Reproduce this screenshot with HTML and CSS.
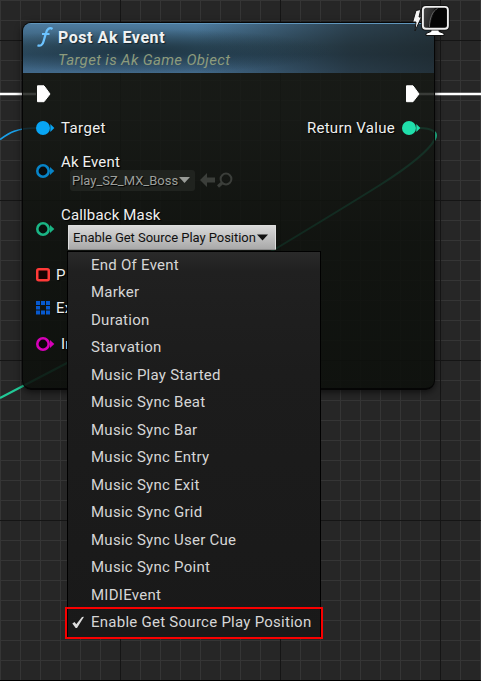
FILE: index.html
```html
<!DOCTYPE html>
<html lang="en">
<head>
<meta charset="utf-8">
<title>Blueprint graph</title>
<link rel="stylesheet" href="styles.css">
</head>
<body>
<main class="graph">
  <svg class="wires" width="481" height="681" viewBox="0 0 481 681" fill="none">
    <path d="M0 94H36M419 94H481" stroke="#fff" stroke-width="2.6"/>
    <path d="M0 139.500C9 133 17 128 36 128" stroke="#1a9fe8" stroke-width="1.700"/>
    <path d="M419 128C432 128 438.500 132 435 139C428 153 402 171 380 185C345 207 310 228 277 248C205 291 140 327 67 363L0 398" stroke="#22c997" stroke-width="2"/>
  </svg>

  <section class="node">
    <header class="node-head">
      <svg class="fn" width="18" height="22" viewBox="0 0 18 22" fill="none" stroke="#6cc3ff"><path d="M16.500 3C13.500 1 11 3 10 7L7.500 15.500C6.600 19 4.500 20.500 1.500 19.300" stroke-width="2.300"/><path d="M6 8H13.500" stroke-width="1.800"/></svg>
      <div>
        <h1 class="title">Post Ak Event</h1>
        <p class="subtitle">Target is Ak Game Object</p>
      </div>
    </header>
    <div class="row exec">
      <svg width="16" height="18" viewBox="0 0 16 18"><path d="M1.500 .8H8L14 9L8 16.700H1.500Z" fill="#fff" stroke="#fff" stroke-linejoin="round"/></svg>
      <svg width="16" height="18" viewBox="0 0 16 18"><path d="M1.500 .8H8L14 9L8 16.700H1.500Z" fill="#fff" stroke="#fff" stroke-linejoin="round"/></svg>
    </div>
    <div class="row target">
      <svg class="pin" width="19" height="16" viewBox="0 0 19 16" fill="#08a5f4"><circle cx="7" cy="8" r="7"/><path d="M14.300 4L18.300 8L14.300 12Z"/></svg>
      <span class="label lt">Target</span>
      <span class="label lr">Return Value</span>
      <svg class="pin" width="19" height="16" viewBox="0 0 19 16" fill="#20dfab"><circle cx="7" cy="8" r="7"/><path d="M14.300 4L18.300 8L14.300 12Z"/></svg>
    </div>
    <div class="row event">
      <svg class="pin" width="19" height="16" viewBox="0 0 19 16"><circle cx="7" cy="8" r="5.700" fill="#070b0d" stroke="#0784c8" stroke-width="2.600"/><path d="M14 4L18.300 8L14 12Z" fill="#0784c8"/></svg>
      <div class="field">
        <span class="label le">Ak Event</span>
        <div class="picker-line">
          <div class="picker"><span class="picker-text">Play_SZ_MX_Boss</span><svg width="11" height="6" viewBox="0 0 11 6"><path d="M0 0H11L5.500 6Z" fill="#999c98"/></svg></div>
          <svg class="tool" width="16" height="14" viewBox="0 0 16 14"><path d="M0 7L7 0V4.500H15V9.500H7V14Z" fill="#3b3e3a"/></svg>
          <svg class="tool" width="17" height="16" viewBox="0 0 17 16" fill="none" stroke="#3b3e3a"><circle cx="9" cy="7" r="5.400" stroke-width="2"/><path d="M5 11L1 14.500" stroke-width="3"/></svg>
        </div>
      </div>
    </div>
    <div class="row mask">
      <svg class="pin" width="19" height="16" viewBox="0 0 19 16"><circle cx="7" cy="8" r="5.700" fill="#07100c" stroke="#1ab484" stroke-width="2.600"/><path d="M14 4L18.300 8L14 12Z" fill="#1ab484"/></svg>
      <span class="label lc">Callback Mask</span>
    </div>
    <div class="row plain">
      <svg class="pin" width="15" height="14" viewBox="0 0 15 14"><rect x="1.250" y="1.250" width="11.500" height="11" rx="1.500" fill="#1a0303" stroke="#ff3a38" stroke-width="2.500"/></svg>
      <span class="label lp">P</span>
    </div>
    <div class="row plain array">
      <svg class="pin" width="15" height="14" viewBox="0 0 15 14" fill="#0759ce"><path d="M0 0H4V4H0ZM5 0H9V4H5ZM10 0H14V4H10ZM0 5H4V8.500H0ZM10 5H14V8.500H10ZM0 9.500H4V13.500H0ZM5 9.500H9V13.500H5ZM10 9.500H14V13.500H10Z"/></svg>
      <span class="label lp">Ex</span>
    </div>
    <div class="row plain info">
      <svg class="pin" width="19" height="16" viewBox="0 0 19 16"><circle cx="7" cy="8" r="5.700" fill="#0c040a" stroke="#d600b8" stroke-width="2.600"/><path d="M14 4L18.300 8L14 12Z" fill="#d600b8"/></svg>
      <span class="label li">In</span>
    </div>
  </section>

  <svg class="badge" width="40" height="38" viewBox="0 0 40 38">
    <defs><linearGradient id="scr" x1="0" y1="0" x2="1" y2="0.300"><stop offset="0" stop-color="#494949"/><stop offset=".42" stop-color="#2b2b2b"/><stop offset=".5" stop-color="#050505"/></linearGradient></defs>
    <path d="M5 10.500L9.800 9.500L8 17H10.500L4 31L5 22H1.700Z" fill="#f4f4f4" stroke="#151515"/>
    <path d="M20 29H28V31.500L33 33.500V35.500H15V33.500L20 31.500Z" fill="#fff" stroke="#111"/>
    <rect x="10.200" y="5.200" width="28.300" height="25.300" rx="4" fill="#111"/>
    <rect x="11.900" y="6.900" width="25" height="21.800" rx="3" fill="url(#scr)" stroke="#f0f0f0" stroke-width="1.900"/>
    <path d="M18.500 27C18.500 18 21.500 11 26.500 8.500" stroke="#626262" fill="none"/>
  </svg>

  <button class="combo"><span class="combo-text">Enable Get Source Play Position</span><svg width="11" height="7" viewBox="0 0 11 7"><path d="M0 .5H11L5.500 6.500Z" fill="#101010"/></svg></button>

  <ul class="menu">
    <li><span>End Of Event</span></li>
    <li><span>Marker</span></li>
    <li><span>Duration</span></li>
    <li><span>Starvation</span></li>
    <li><span>Music Play Started</span></li>
    <li><span>Music Sync Beat</span></li>
    <li><span>Music Sync Bar</span></li>
    <li><span>Music Sync Entry</span></li>
    <li><span>Music Sync Exit</span></li>
    <li><span>Music Sync Grid</span></li>
    <li><span>Music Sync User Cue</span></li>
    <li><span>Music Sync Point</span></li>
    <li><span>MIDIEvent</span></li>
    <li class="checked"><svg class="check" width="13" height="13" viewBox="0 0 13 13"><path d="M.3 7.500L2.500 6L4.300 8.300L10 1L12 .8L5 12H3.700Z" fill="#dcdcdc"/></svg><span>Enable Get Source Play Position</span></li>
  </ul>
  <div class="highlight"></div>
</main>
</body>
</html>
```
FILE: styles.css
```css
* { box-sizing: border-box; }
body { margin: 0; font-family: Roboto, "Liberation Sans", sans-serif; }
h1, p, ul { margin: 0; padding: 0; }
svg { display: block; flex: none; }

.graph {
  position: relative;
  width: 481px;
  height: 681px;
  overflow: hidden;
  border-bottom: 1px solid #000;
  background-color: #262626;
  background-image:
    linear-gradient(90deg, #151515 1px, transparent 1px),
    linear-gradient(#151515 1px, transparent 1px),
    linear-gradient(90deg, #353535 1px, transparent 1px),
    linear-gradient(#353535 1px, transparent 1px);
  background-size: 160px 160px, 160px 160px, 20px 20px, 20px 20px;
  background-position: 120px 0, 0 40px, 0 0, 0 0;
}
.wires { position: absolute; inset: 0; }

.node {
  position: absolute;
  left: 22px;
  top: 22px;
  width: 413px;
  height: 368px;
  border: 1px solid #050505;
  border-width: 1px 1px 2px;
  border-radius: 9px;
  overflow: hidden;
  background: linear-gradient(rgba(22, 25, 20, .86), rgba(20, 23, 19, .84) 25%, rgba(14, 17, 13, .87) 60%, rgba(13, 16, 12, .9));
  box-shadow: 0 2px 7px rgba(0, 0, 0, .6);
}
.node-head {
  display: flex;
  height: 50px;
  padding: 4px 0 0 13px;
  border-top: 1px solid #6096bc;
  background:
    radial-gradient(ellipse 190px 22px at 120px 27px, rgba(25, 44, 54, .75), transparent),
    linear-gradient(90deg, transparent 42%, rgba(27, 35, 38, .65) 80%, rgba(27, 35, 38, .8)),
    linear-gradient(#4e7ca0, #34566c 45%, #2f5068 62%, #42698a);
}
.fn { margin-right: 4px; margin-top: -2px; }
.title {
  font-size: 16px;
  line-height: 20px;
  font-weight: 700;
  letter-spacing: .55px;
  color: #f0f2f3;
  text-shadow: 1px 1px 1px rgba(0, 0, 0, .5);
}
.subtitle {
  font-size: 15px;
  line-height: 19px;
  margin-top: 3px;
  font-style: italic;
  letter-spacing: .35px;
  color: #8d9b7c;
}
.row { display: flex; align-items: center; padding-left: 13px; }
.exec { height: 40px; margin-top: 1px; justify-content: space-between; padding-right: 13px; }
.target { height: 28px; }
.label {
  color: #eff0ef;
  font-size: 15px;
  line-height: 18px;
  letter-spacing: .2px;
  white-space: nowrap;
  text-shadow: 1px 1px 1px #000;
}
.lt, .lc, .le { margin-left: 6px; }
.lt { letter-spacing: .4px; }
.lr { margin-left: auto; margin-right: 7px; letter-spacing: .28px; }
.target .pin:last-child { margin-right: 13px; }
.event { height: 42px; margin-top: 8px; }
.event .pin { margin-top: 0; }
.picker-line { display: flex; align-items: center; margin: -1px 0 0 15px; }
.picker {
  display: flex;
  align-items: center;
  justify-content: space-between;
  width: 125px;
  height: 21px;
  padding: 0 5px 0 2px;
  border-radius: 3px;
  background: #20231f;
}
.picker-text { font-size: 13px; color: #9c9f9b; white-space: nowrap; text-shadow: 1px 1px 1px #000; }
.tool { margin-left: 5px; }
.tool + .tool { margin-left: 1px; }
.le, .lc { letter-spacing: .15px; }
.mask { height: 42px; }
.mask .pin { margin-top: 32px; }
.lc { align-self: flex-start; margin-top: 14px; }
.plain { height: 33px; margin-top: 24px; }
.array { margin-top: 0; }
.info { margin-top: 3px; }
.lp { margin-left: 5px; }
.li { margin-left: 6px; }

.badge { position: absolute; left: 411px; top: 0; }

.combo {
  position: absolute;
  left: 68px;
  top: 225px;
  width: 208px;
  height: 25px;
  display: flex;
  align-items: center;
  justify-content: space-between;
  padding: 0 7px 0 4px;
  border: 1px solid #dedede;
  border-bottom-color: #8c8c8c;
  border-radius: 1px;
  background: linear-gradient(#d9d9d9, #a9a9a9);
  font: 13px/20px Roboto, sans-serif;
  letter-spacing: -.04px;
  color: #101010;
  white-space: nowrap;
}
.menu {
  position: absolute;
  left: 67px;
  top: 251px;
  width: 254px;
  height: 387px;
  border: 1px solid #000;
  list-style: none;
  background: linear-gradient(#2a2a2a, #202020 20px, #1c1c1c 120px, #191919);
}
.menu li {
  display: flex;
  align-items: center;
  height: 27.48px;
  padding: 0 0 1.6px 23px;
  font-size: 15px;
  letter-spacing: .26px;
  color: #d6d6d6;
  white-space: nowrap;
}
.menu .checked { padding-left: 4px; }
.check { margin-right: 6px; }
.highlight {
  position: absolute;
  left: 65px;
  top: 607px;
  width: 258px;
  height: 32px;
  border: 2px solid #f80000;
}
```
